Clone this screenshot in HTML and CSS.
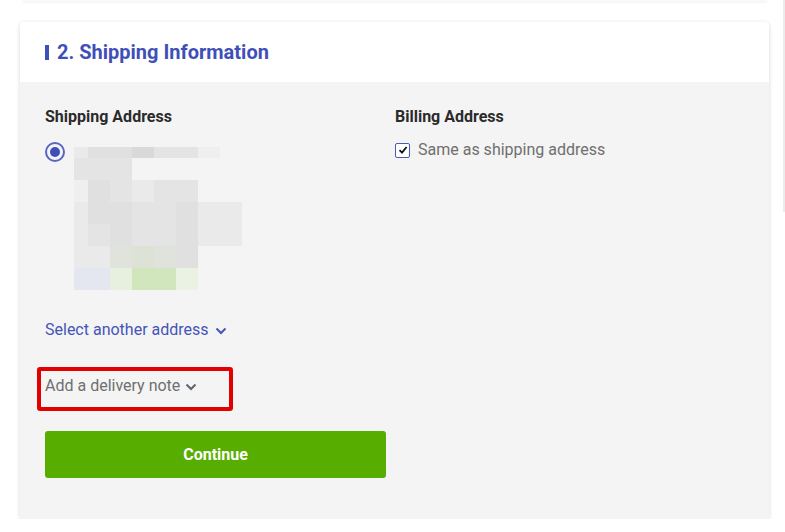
FILE: index.html
```html
<!doctype html>
<html>
<head>
<meta charset="utf-8">
<meta name="viewport" content="width=device-width, initial-scale=1">
<title>Checkout - Shipping Information</title>
<link rel="stylesheet" href="styles.css">
</head>

<body>
<div class="page">
	<div class="main">
		<div class="card-prev"></div>

		<div class="card">
			<div class="card-head">
				<span class="bar"></span>
				<h2>2. Shipping Information</h2>
			</div>

			<div class="card-body">
				<div class="col col-left">
					<h3>Shipping Address</h3>
					<div class="address">
						<span class="radio"><span class="dot"></span></span>
						<div class="blur">
							<i class="c1"></i><i class="c3"></i><i class="c3"></i><i class="c4"></i><i class="c2"></i><i class="c2"></i><i class="c0"></i><i class="cx"></i>
							<i class="c2"></i><i class="c2"></i><i class="c2"></i><i class="cx"></i><i class="cx"></i><i class="cx"></i><i class="cx"></i><i class="cx"></i>
							<i class="c0"></i><i class="c3"></i><i class="c2"></i><i class="c1"></i><i class="c2"></i><i class="c2"></i><i class="cx"></i><i class="cx"></i>
							<i class="c1"></i><i class="c3"></i><i class="c3"></i><i class="c2"></i><i class="c2"></i><i class="c3"></i><i class="c1"></i><i class="c1"></i>
							<i class="c1"></i><i class="c2"></i><i class="c3"></i><i class="c2"></i><i class="c2"></i><i class="c3"></i><i class="c1"></i><i class="c1"></i>
							<i class="c1"></i><i class="c1"></i><i class="g1"></i><i class="g2"></i><i class="g1"></i><i class="c3"></i><i class="cx"></i><i class="cx"></i>
							<i class="b1"></i><i class="b1"></i><i class="g3"></i><i class="g4"></i><i class="g4"></i><i class="g5"></i><i class="cx"></i><i class="cx"></i>
						</div>
					</div>

					<a class="more" href="#">Select another address
						<svg width="12" height="8" viewBox="0 0 12 8"><path d="M1.5 1.5 L6 6 L10.5 1.5" fill="none" stroke="currentColor" stroke-width="2"/></svg>
					</a>

					<div class="note">
						Add a delivery note
						<svg width="12" height="8" viewBox="0 0 12 8"><path d="M1.5 1.5 L6 6 L10.5 1.5" fill="none" stroke="#5f6368" stroke-width="2"/></svg>
						<span class="mark"></span>
					</div>

					<button class="btn">Continue</button>
				</div>

				<div class="col col-right">
					<h3>Billing Address</h3>
					<label class="check">
						<span class="box">
							<svg width="10" height="10" viewBox="0 0 10 10"><path d="M1.5 5.2 L4 7.6 L8.6 2" fill="none" stroke="#111" stroke-width="1.8"/></svg>
						</span>
						Same as shipping address
					</label>
				</div>
			</div>
		</div>
	</div>
	<div class="rail"></div>
</div>
</body>
</html>
```

FILE: styles.css
```css
body{
	margin:0;
	background-color:#fff;
	font-family:Roboto, "Liberation Sans", Arial, sans-serif;
	color:#333;
	}
.page{
	display:flex;
	align-items:flex-start;
	}
.main{
	width:749px;
	margin-left:20px;
	}
.rail{
	width:2px;
	height:212px;
	margin-left:14px;
	background-color:#ececec;
	}
.card-prev{
	height:1px;
	margin:0 2px 21px 2px;
	background-color:#fafafa;
	box-shadow:0 1px 3px rgba(0,0,0,.12);
	}
.card{
	border-radius:4px;
	overflow:hidden;
	box-shadow:0 1px 4px rgba(0,0,0,.16);
	}
.card-head{
	height:60px;
	background-color:#fff;
	display:flex;
	align-items:center;
	padding-left:25px;
	}
.bar{
	width:4px;
	height:15px;
	background-color:#3f4fb8;
	margin-right:8px;
	}
.card-head h2{
	margin:0;
	font-size:20px;
	font-weight:700;
	color:#3f4fb8;
	}
.card-body{
	background-color:#f4f4f4;
	padding:25px 25px 41px 25px;
	display:flex;
	}
.col-left{
	width:350px;
	}
.col h3{
	margin:0;
	font-size:16px;
	line-height:20px;
	font-weight:700;
	color:#2b2b2b;
	}
.address{
	display:flex;
	align-items:flex-start;
	margin-top:15px;
	}
.radio{
	width:16px;
	height:16px;
	border:2px solid #5866c0;
	border-radius:50%;
	display:flex;
	align-items:center;
	justify-content:center;
	margin-right:9px;
	}
.dot{
	width:10px;
	height:10px;
	border-radius:50%;
	background-color:#3f4fb8;
	}
.blur{
	margin-top:5px;
	display:grid;
	grid-template-columns:14px repeat(7, 22px);
	grid-template-rows:11px repeat(6, 22px);
	}
.blur i{ display:block; }
.cx{ background-color:transparent; }
.c0{ background-color:#efefef; }
.c1{ background-color:#eaeaea; }
.c2{ background-color:#e4e4e4; }
.c3{ background-color:#e0e0e0; }
.c4{ background-color:#d9d9d9; }
.g1{ background-color:#e0e2dc; }
.g2{ background-color:#dce2d6; }
.g3{ background-color:#e7f0de; }
.g4{ background-color:#d1e6bc; }
.g5{ background-color:#eaf2e4; }
.b1{ background-color:#e4e7f0; }
.more{
	display:inline-flex;
	align-items:center;
	margin-top:30px;
	font-size:16px;
	line-height:20px;
	color:#4454b8;
	text-decoration:none;
	}
.more svg{
	margin-left:6px;
	margin-top:1px;
	}
.note{
	position:relative;
	display:flex;
	align-items:center;
	margin-top:36px;
	font-size:16px;
	line-height:20px;
	color:#6f6f6f;
	}
.note svg{
	margin-left:5px;
	margin-top:2px;
	}
.mark{
	position:absolute;
	left:-8px;
	top:-9px;
	width:188px;
	height:36px;
	border:4px solid #e30000;
	border-radius:3px;
	}
.btn{
	display:block;
	width:341px;
	height:47px;
	margin-top:35px;
	border:none;
	border-radius:3px;
	background-color:#57ae00;
	color:#fff;
	font-family:Roboto, "Liberation Sans", Arial, sans-serif;
	font-size:16px;
	font-weight:700;
	cursor:pointer;
	}
.check{
	display:flex;
	align-items:center;
	margin-top:13px;
	font-size:16px;
	line-height:20px;
	color:#6f6f6f;
	}
.box{
	width:13px;
	height:13px;
	border:1.5px solid #4a58b8;
	border-radius:2px;
	background-color:#fff;
	display:flex;
	align-items:center;
	justify-content:center;
	margin-right:8px;
	}
```
